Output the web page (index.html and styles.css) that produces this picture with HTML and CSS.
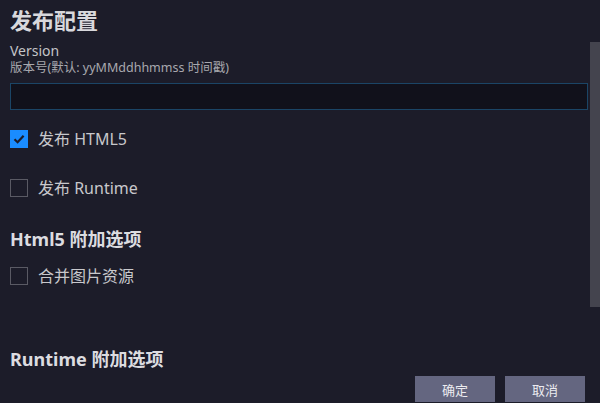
FILE: index.html
```html
<!DOCTYPE html>
<html lang="zh">
<head>
<meta charset="utf-8">
<title>发布配置</title>
<link rel="stylesheet" href="styles.css">
</head>
<body>
<div class="page">
  <div class="main">
    <h1 class="title">发布配置</h1>
    <div class="field-label">Version</div>
    <div class="field-hint">版本号(默认: yyMMddhhmmss 时间戳)</div>
    <div class="input"></div>
    <div class="check-row row-first">
      <span class="box checked"><svg width="18" height="18" viewBox="0 0 18 18"><path d="M4.5 9.2 L7.6 12.2 L13.6 5.8" fill="none" stroke="#1c1c29" stroke-width="2.2"/></svg></span>
      <span class="check-label">发布 HTML5</span>
    </div>
    <div class="check-row row-second">
      <span class="box"></span>
      <span class="check-label">发布 Runtime</span>
    </div>
    <h2 class="section">Html5 附加选项</h2>
    <div class="check-row row-third">
      <span class="box"></span>
      <span class="check-label">合并图片资源</span>
    </div>
    <h2 class="section section-runtime">Runtime 附加选项</h2>
    <div class="footer">
      <button class="btn">确定</button>
      <button class="btn">取消</button>
    </div>
  </div>
  <div class="scrollbar"><div class="thumb"></div></div>
</div>
</body>
</html>
```
FILE: styles.css
```css
html, body {
  margin: 0;
  padding: 0;
  background: #1c1c29;
}
body {
  font-family: "Noto Sans", "Noto Sans CJK SC", sans-serif;
  color: #c8c8cc;
}
.page {
  display: flex;
  width: 600px;
  height: 403px;
  overflow: hidden;
}
.main {
  flex: 1;
  display: flex;
  flex-direction: column;
  padding: 0 2px 0 10px;
}
.title {
  margin: 5px 0 0;
  font-size: 22px;
  line-height: 30px;
  font-weight: 700;
  color: #d8d8dc;
}
.field-label {
  margin-top: 7px;
  font-size: 14px;
  line-height: 18px;
  color: #c4c4c8;
}
.field-hint {
  font-size: 12.5px;
  line-height: 16px;
  color: #a8a8ae;
}
.input {
  margin-top: 7px;
  height: 25px;
  border: 1px solid #1b4566;
  background: #11111b;
}
.check-row {
  display: flex;
  align-items: center;
  height: 18px;
}
.row-first { margin-top: 20px; }
.row-second { margin-top: 31px; }
.row-third { margin-top: 17px; }
.box {
  width: 16px;
  height: 16px;
  border: 1px solid #5a5a64;
  flex: none;
}
.box.checked {
  width: 18px;
  height: 18px;
  border: none;
  background: #1a8cff;
}
.box svg { display: block; }
.check-label {
  margin-left: 10px;
  font-size: 16px;
  line-height: 18px;
  color: #c8c8cc;
}
.section {
  margin: 31px 0 0;
  font-size: 18px;
  line-height: 22px;
  font-weight: 700;
  color: #dcdce0;
}
.section-runtime {
  margin-top: 63px;
}
.footer {
  margin-top: auto;
  display: flex;
  justify-content: flex-end;
  gap: 10px;
  padding-right: 3px;
  padding-bottom: 1px;
}
.btn {
  width: 80px;
  height: 26px;
  border: none;
  background: #646680;
  color: #ececf0;
  font-family: "Noto Sans CJK SC", sans-serif;
  font-size: 13px;
  padding: 0;
}
.scrollbar {
  width: 10px;
  flex: none;
}
.thumb {
  margin-top: 42px;
  height: 265px;
  background: #44444e;
}
```
